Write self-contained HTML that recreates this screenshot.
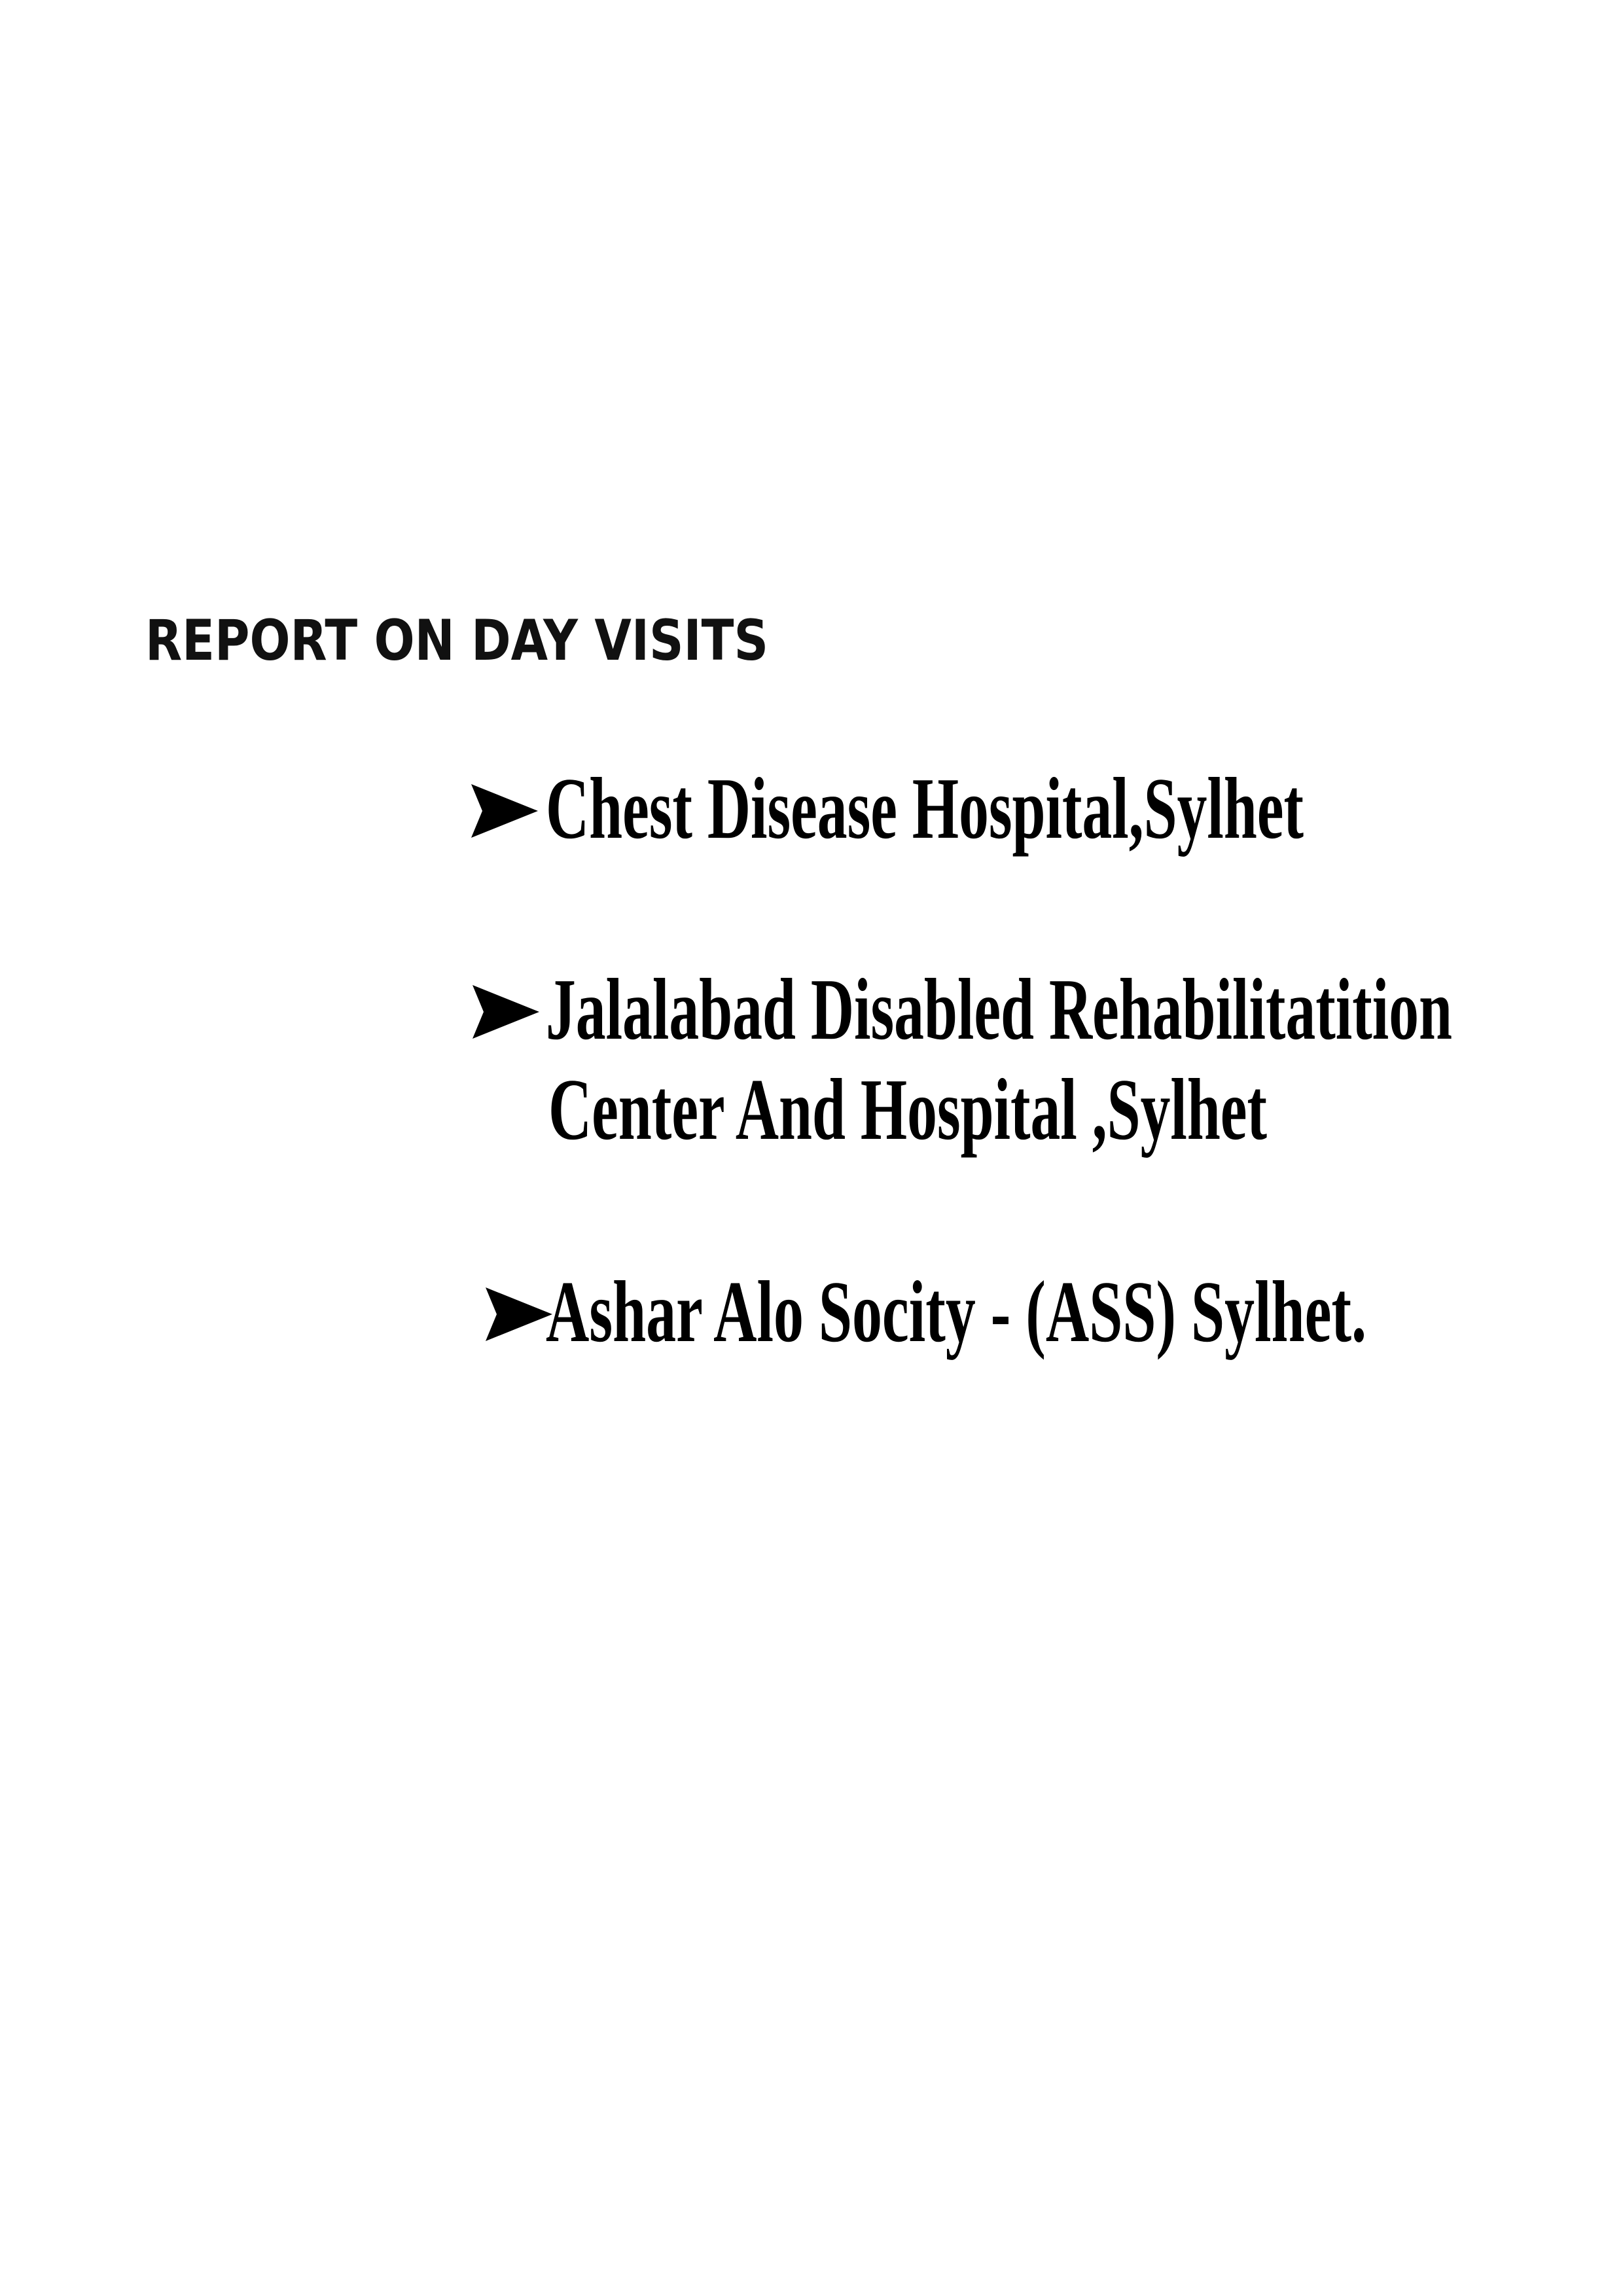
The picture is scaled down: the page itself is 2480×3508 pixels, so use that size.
<!DOCTYPE html>
<html><head><meta charset="utf-8"><style>
html,body{margin:0;padding:0;background:#fff;}
svg{display:block;}
</style></head><body>
<svg width="2480" height="3508" viewBox="0 0 2480 3508" xmlns="http://www.w3.org/2000/svg">
<rect width="2480" height="3508" fill="#fff"/>
<text x="222" y="1008" font-family="DejaVu Sans, sans-serif" font-weight="bold" font-size="86" textLength="952" lengthAdjust="spacingAndGlyphs" fill="#111">REPORT ON DAY VISITS</text>
<g fill="#000">
<polygon points="720,1198 822,1239 720,1280 737,1239"/>
<polygon points="722,1505 824,1546 722,1587 739,1546"/>
<polygon points="742,1967 844,2008 742,2049 759,2008"/>
</g>
<g font-family="Liberation Serif, serif" font-weight="bold" font-size="134" fill="#000">
<text x="834" y="1280" textLength="1158" lengthAdjust="spacingAndGlyphs">Chest Disease Hospital,Sylhet</text>
<text x="834" y="1587" textLength="1385" lengthAdjust="spacingAndGlyphs">Jalalabad Disabled Rehabilitatition</text>
<text x="838" y="1740" textLength="1098" lengthAdjust="spacingAndGlyphs">Center And Hospital ,Sylhet</text>
<text x="834" y="2049" textLength="1254" lengthAdjust="spacingAndGlyphs">Ashar Alo Socity - (ASS) Sylhet.</text>
</g>
</svg>
</body></html>
